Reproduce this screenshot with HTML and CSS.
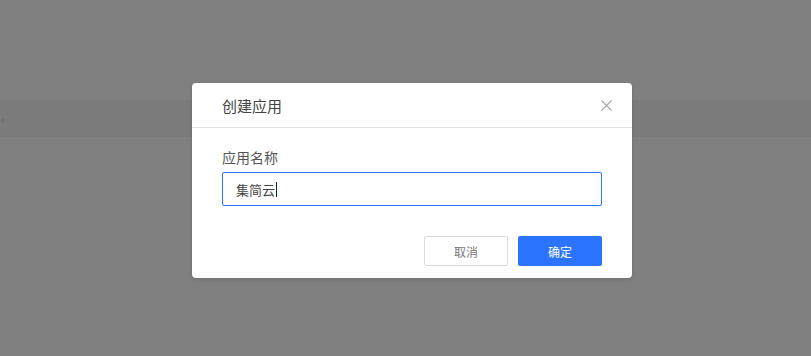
FILE: index.html
```html
<html>

<head>
    <title>创建应用</title>
    <link rel="stylesheet" href="styles.css">
</head>

<body>
    <div class="page">
        <div class="band"><span class="band-mark">&lsaquo;</span></div>
    </div>

    <div class="mask"></div>

    <div class="modal">
        <div class="modal-header">
            <span class="modal-title">创建应用</span>
            <span class="modal-close">
                <svg width="11" height="11" viewBox="0 0 11 11">
                    <path d="M0.5 0.5 L10.5 10.5 M10.5 0.5 L0.5 10.5" stroke="#a8a8a8" stroke-width="1.2" fill="none"/>
                </svg>
            </span>
        </div>
        <div class="modal-body">
            <div class="field-label">应用名称</div>
            <div class="field-input"><span>集简云</span><span class="caret"></span></div>
        </div>
        <div class="modal-footer">
            <div class="btn btn-cancel">取消</div>
            <div class="btn btn-ok">确定</div>
        </div>
    </div>
</body>

</html>
```

FILE: styles.css
```css
html,
body {
    margin: 0;
    height: 100%;
    overflow: hidden;
}

body {
    font-family: "Noto Sans CJK SC", "Liberation Sans", sans-serif;
    background-color: #808080;
}

.page {
    padding-top: 100px;
}

.band {
    height: 37px;
    background-color: #7b7b7b;
    display: flex;
    align-items: center;
}

.band-mark {
    margin-left: 1px;
    font-size: 11px;
    color: #5a6470;
}

.mask {
    position: absolute;
    top: 0;
    left: 0;
    right: 0;
    bottom: 0;
}

.modal {
    position: absolute;
    top: 83px;
    left: 192px;
    width: 440px;
    background-color: #FFF;
    border-radius: 4px;
    box-shadow: 0 1px 4px rgba(0, 0, 0, .15);
}

.modal-header {
    height: 44px;
    display: flex;
    align-items: center;
    justify-content: space-between;
    padding: 0 20px 0 30px;
    border-bottom: 1px solid #e3e3e3;
}

.modal-title {
    font-size: 15px;
    color: #444;
}

.modal-close {
    display: flex;
    margin-top: 1px;
}

.modal-body {
    padding: 19px 30px 0 30px;
}

.field-label {
    font-size: 14px;
    line-height: 20px;
    color: #555;
    margin-bottom: 5px;
}

.field-input {
    height: 34px;
    box-sizing: border-box;
    border: 1px solid #2f72f5;
    border-radius: 2px;
    padding: 0 13px;
    display: flex;
    align-items: center;
    font-size: 13px;
    color: #444;
}

.caret {
    display: inline-block;
    width: 1px;
    height: 15px;
    background-color: #222;
    margin-left: 1px;
}

.modal-footer {
    display: flex;
    justify-content: flex-end;
    gap: 10px;
    padding: 30px 30px 12px 30px;
}

.btn {
    width: 84px;
    height: 30px;
    box-sizing: border-box;
    border-radius: 2px;
    display: flex;
    align-items: center;
    justify-content: center;
    font-size: 12px;
}

.btn-cancel {
    border: 1px solid #dadada;
    color: #777;
}

.btn-ok {
    background-color: #2b74ff;
    color: #FFF;
}
```
